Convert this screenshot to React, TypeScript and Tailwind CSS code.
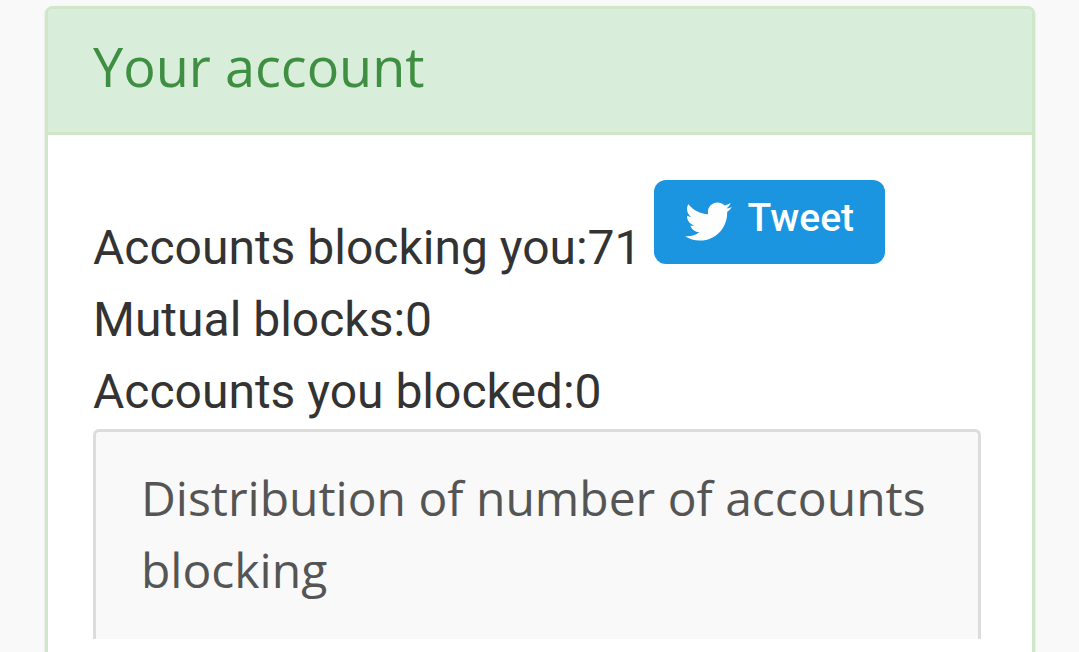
const stats = [
  { label: 'Accounts blocking you', value: 71, share: true },
  { label: 'Mutual blocks', value: 0, share: false },
  { label: 'Accounts you blocked', value: 0, share: false },
];

function BirdIcon() {
  return (
    <svg aria-hidden="true" viewBox="4.9 9 64 52" className="h-[39px] w-[47px]" fill="currentColor">
      <path d="M68.812 15.14c-2.348 1.04-4.87 1.744-7.52 2.06 2.704-1.62 4.78-4.186 5.757-7.243-2.53 1.5-5.33 2.592-8.314 3.176C56.35 10.59 52.948 9 49.182 9c-7.23 0-13.092 5.86-13.092 13.093 0 1.026.118 2.02.338 2.98C25.543 24.527 15.9 19.318 9.44 11.396c-1.125 1.936-1.77 4.184-1.77 6.58 0 4.543 2.312 8.552 5.824 10.9-2.146-.07-4.165-.658-5.93-1.64-.002.056-.002.11-.002.163 0 6.345 4.513 11.638 10.504 12.84-1.1.298-2.256.457-3.45.457-.845 0-1.666-.078-2.464-.23 1.667 5.2 6.5 8.985 12.23 9.09-4.482 3.51-10.13 5.605-16.26 5.605-1.055 0-2.096-.06-3.122-.184 5.794 3.717 12.676 5.882 20.067 5.882 24.083 0 37.25-19.95 37.25-37.25 0-.565-.013-1.133-.038-1.693 2.558-1.847 4.778-4.15 6.532-6.774z" />
    </svg>
  );
}

function TweetButton() {
  return (
    <button
      type="button"
      className="flex h-[84px] items-center gap-4 rounded-xl bg-[#1b95e0] px-[31px] pb-0.5 text-[39px] font-medium leading-none text-white"
    >
      <BirdIcon />
      <span className="pb-1.5">Tweet</span>
    </button>
  );
}

function Distribution() {
  return (
    <section className="mt-px mr-1.5 rounded-t-md border-3 border-b-0 border-[#dcdcdc] bg-[#f9f9f9] px-[45px] pt-[30px] pb-[33px] text-[#555]">
      <h3 className="font-['Open_Sans',sans-serif] text-[48px] leading-[72px]">
        Distribution of number of accounts blocking
      </h3>
    </section>
  );
}

export default function App() {
  return (
    <main className="min-h-screen bg-[#f9f9f9] pr-11 pl-[45px] pt-1.5 font-['Roboto',sans-serif] text-[#333]">
      <section className="flex min-h-[calc(100vh-6px)] flex-col rounded-t-lg border-3 border-b-0 border-[#cfe6c9] bg-white shadow-sm">
        <header className="rounded-t-[5px] border-b-3 border-[#cfe6c9] bg-[#d8edda] px-[45px] pt-[21px] pb-[30px]">
          <h2 className="font-['Open_Sans',sans-serif] text-[54px] leading-[72px] text-[#3f8f43]">
            Your account
          </h2>
        </header>
        <div className="px-[45px] pt-[45px]">
          {stats.map(({ label, value, share }) => (
            <div key={label} className="flex flex-wrap items-start gap-x-3 text-[48px] leading-[72px]">
              <p className={share ? 'pt-8' : ''}>
                {label}:{value}
              </p>
              {share && <TweetButton />}
            </div>
          ))}
          <Distribution />
        </div>
      </section>
    </main>
  );
}
